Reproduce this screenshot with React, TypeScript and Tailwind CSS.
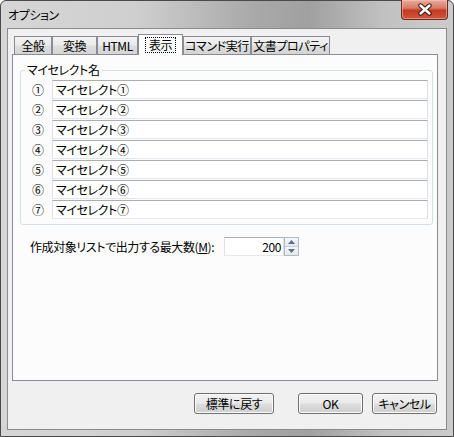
import React from 'react';

const rows = ['①', '②', '③', '④', '⑤', '⑥', '⑦'];

const tabs = [
  { label: '全般', w: 'w-[38px]' },
  { label: '変換', w: 'w-[45px]' },
  { label: 'HTML', w: 'w-[41px]' },
  { label: '表示', w: 'w-[45px]', active: true },
  { label: 'コマンド実行', w: 'w-[68px]' },
  { label: '文書プロパティ', w: 'w-[79px]' },
];

const btn =
  'h-[21px] flex items-center justify-center rounded-[3px] border border-[#707070] bg-[linear-gradient(180deg,#f2f2f2_0%,#ebebeb_48%,#dddddd_52%,#cfcfcf_100%)] shadow-[inset_0_0_0_1px_#fbfbfb] whitespace-nowrap';

export default function App() {
  return (
    <div className="w-[454px] h-[437px] flex flex-col rounded-t-[6px] border border-[#4a4a4a] bg-[linear-gradient(90deg,#d6d6d6_0%,#cfcfcf_30%,#aaaaaa_55%,#a0a0a0_68%,#c2c2c2_85%,#cbcbcb_100%)] px-[6px] pb-[6px] text-[12px] text-black tracking-[-0.4px] font-['Noto_Sans_CJK_JP',sans-serif] [font-feature-settings:'palt'] [font-variant-east-asian:proportional-width]">
      {/* Title bar */}
      <div className="h-[27px] flex items-start">
        <span className="mt-[6px] ml-[1px] text-[12px] leading-[16px]">オプション</span>
        <div className="ml-auto -mr-px w-[47px] h-[20px] -mt-px flex items-center justify-center rounded-b-[4px] border border-t-0 border-[#6a2a20] bg-[linear-gradient(180deg,#e9ab9c_0%,#d87a66_42%,#c23b22_55%,#cf553b_100%)] shadow-[inset_0_0_0_1px_rgba(255,200,190,0.5)]">
          <svg width="16" height="13" viewBox="0 0 16 13">
            <path d="M3.5 2.5 L12.5 10.5 M12.5 2.5 L3.5 10.5" stroke="#3c1a14" strokeWidth="4.4" strokeLinecap="round" />
            <path d="M3.5 2.5 L12.5 10.5 M12.5 2.5 L3.5 10.5" stroke="#ffffff" strokeWidth="2.4" strokeLinecap="round" />
          </svg>
        </div>
      </div>

      {/* Client area */}
      <div className="flex-1 flex flex-col border border-[#8a8a8a] bg-[#f0f0f0] pt-[5px] pl-[4px]">
        {/* Tabs */}
        <div className="h-[20px] flex items-end ml-[2px]">
          {tabs.map((t) =>
            t.active ? (
              <div
                key={t.label}
                className={`${t.w} h-[21px] -mb-px relative z-10 flex items-center justify-center border border-b-0 border-[#898c95] bg-[#fcfcfc] leading-[14px] whitespace-nowrap`}
              >
                <span className="px-[3px] outline outline-1 outline-dotted outline-black">{t.label}</span>
              </div>
            ) : (
              <div
                key={t.label}
                className={`${t.w} h-[18px] flex items-center justify-center border border-b-0 border-[#898c95] bg-[linear-gradient(180deg,#f3f3f3_0%,#ebebeb_45%,#dedede_55%,#d4d4d4_100%)] leading-[14px] whitespace-nowrap`}
              >
                {t.label}
              </div>
            )
          )}
        </div>

        {/* Panel */}
        <div className="w-[426px] h-[327px] border border-[#898c95] bg-[#fcfcfc] pt-[8px] pl-[7px]">
          <fieldset className="w-[413px] border border-[#d5dfe5] rounded-[3px] pl-[4px] pt-[3px] pb-[5px]">
            <legend className="px-[2px] leading-[14px]">マイセレクト名</legend>
            <div className="flex flex-col gap-[1px] pl-[7px]">
              {rows.map((n) => (
                <div key={n} className="flex items-center h-[19px]">
                  <span className="w-[20px] leading-[14px]">{n}</span>
                  <div className="w-[376px] h-[19px] flex items-center pl-[3px] bg-white border border-[#dbdfe6] border-t-[#abadb3] border-b-[#e3e9ef] leading-[14px]">
                    <span>マイセレクト{n}</span>
                  </div>
                </div>
              ))}
            </div>
          </fieldset>

          <div className="mt-[12px] ml-[10px] flex items-center">
            <span className="w-[194px] leading-[14px] whitespace-nowrap">
              作成対象リストで出力する最大数(<span className="underline">M</span>):
            </span>
            <div className="w-[60px] h-[19px] flex items-center justify-end pr-[2px] bg-white border border-[#dbdfe6] border-t-[#abadb3] border-b-[#e3e9ef] leading-[14px]">
              200
            </div>
            <div className="w-[15px] h-[19px] flex flex-col border border-[#b4b9c2] bg-[#eef1f5]">
              <div className="flex-1 flex items-center justify-center border-b border-[#c6ccd5] bg-[linear-gradient(180deg,#f6f7f9,#e3e8ee)]">
                <svg width="7" height="4" viewBox="0 0 7 4">
                  <path d="M0 4 L3.5 0 L7 4 Z" fill="#5b6f8c" />
                </svg>
              </div>
              <div className="flex-1 flex items-center justify-center bg-[linear-gradient(180deg,#f6f7f9,#e3e8ee)]">
                <svg width="7" height="4" viewBox="0 0 7 4">
                  <path d="M0 0 L3.5 4 L7 0 Z" fill="#5b6f8c" />
                </svg>
              </div>
            </div>
          </div>
        </div>

        {/* Buttons */}
        <div className="mt-[12px] flex justify-end pr-[9px]">
          <button className={`${btn} w-[80px] mr-[24px]`}>標準に戻す</button>
          <button className={`${btn} w-[65px] mr-[9px]`}>OK</button>
          <button className={`${btn} w-[65px]`}>キャンセル</button>
        </div>
      </div>
    </div>
  );
}
